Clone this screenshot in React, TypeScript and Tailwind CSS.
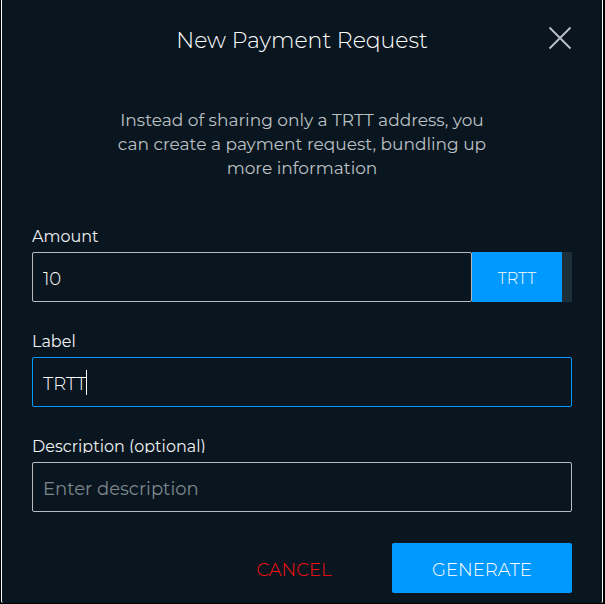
import { useState } from "react";

const labelStyle = "block h-[18px] overflow-hidden text-base leading-6 text-[#f0f1f2]";
const fieldStyle = "h-[50px] w-full rounded-xs border px-2.5 pt-1 text-lg outline-none";

export default function App() {
  const [amount, setAmount] = useState("10");
  const [label, setLabel] = useState("TRTT");
  const [description, setDescription] = useState("");

  return (
    <div className="min-h-screen bg-black pr-0.5 pb-px pl-px font-['Montserrat','Inter',sans-serif]">
      <form
        className="rounded-b-xs border-x border-white bg-[#091620] px-[30px] pb-2.5"
        onSubmit={(e) => e.preventDefault()}
      >
        <header className="relative flex h-20 items-center justify-center">
          <h1 className="text-[22px] font-light text-white">New Payment Request</h1>
          <button type="button" aria-label="Close" className="absolute right-0 text-[#bfc3c7]">
            <svg width="24" height="24" viewBox="0 0 24 24" fill="none" stroke="currentColor" strokeWidth="1.8" className="mb-1">
              <path d="M1.5 1.5 22.5 22.5M22.5 1.5 1.5 22.5" />
            </svg>
          </button>
        </header>

        <p className="mx-auto mt-7 max-w-[400px] text-center text-[17px] leading-6 text-[#bcc0c3]">
          Instead of sharing only a TRTT address, you
          <br />
          can create a payment request, bundling up
          <br />
          more information
        </p>

        <div className="mt-[45px] flex flex-col gap-7">
          <div>
            <label htmlFor="amount" className={labelStyle}>Amount</label>
            <div className="mt-[9px] flex bg-[#1d2f38] pr-2.5">
              <input
                id="amount"
                value={amount}
                onChange={(e) => setAmount(e.target.value)}
                className={`${fieldStyle} min-w-0 flex-1 border-[#b9bcbf] bg-[#091620] font-light text-white`}
              />
              <button type="button" className="w-[90px] bg-[#0099ff] pt-1 text-base font-light text-white">TRTT</button>
            </div>
          </div>

          <div>
            <label htmlFor="label" className={labelStyle}>Label</label>
            <div className={`${fieldStyle} mt-[9px] flex items-center border-[#0099ff] font-light text-white`}>
              <input
                id="label"
                value={label}
                onChange={(e) => setLabel(e.target.value)}
                className="field-sizing-content bg-transparent caret-transparent outline-none"
              />
              <span className="mb-1 h-[25px] w-px bg-white" />
            </div>
          </div>

          <div>
            <label htmlFor="description" className={labelStyle}>Description (optional)</label>
            <input
              id="description"
              value={description}
              onChange={(e) => setDescription(e.target.value)}
              placeholder="Enter description"
              className={`${fieldStyle} mt-[9px] border-[#b9bcbf] bg-transparent text-white placeholder:text-[#7d868c]`}
            />
          </div>
        </div>

        <div className="mt-[31px] flex justify-end gap-2 text-lg font-light">
          <button type="button" className="h-[50px] w-[180px] pt-1 text-[#ff1010]">CANCEL</button>
          <button type="submit" className="h-[50px] w-[180px] rounded-xs bg-[#0099ff] pt-1 text-white">GENERATE</button>
        </div>
      </form>
    </div>
  );
}
